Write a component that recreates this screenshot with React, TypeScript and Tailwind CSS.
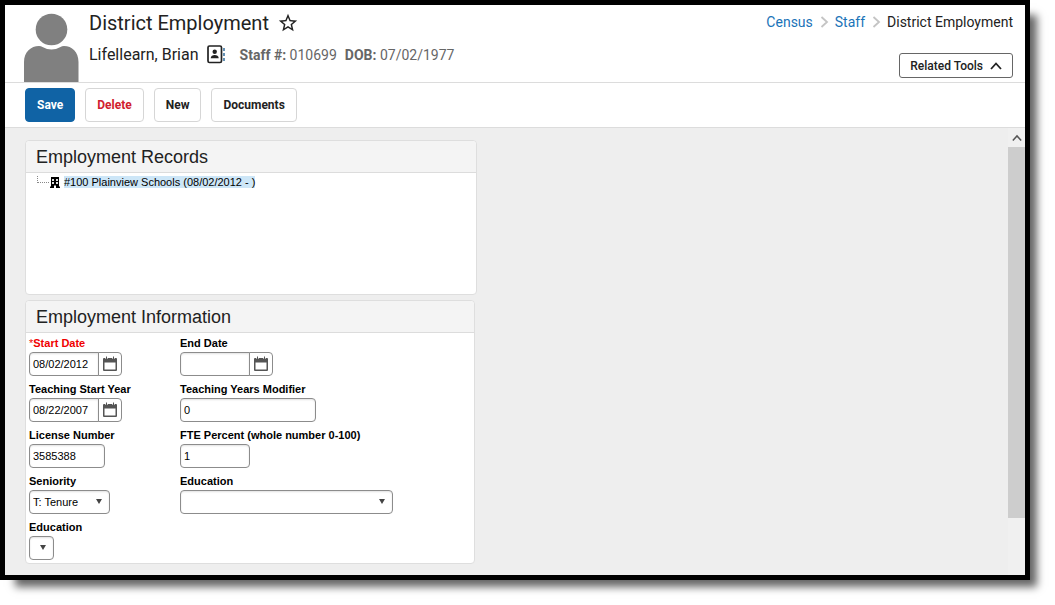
import { useState } from 'react';
import { MdStarBorder } from 'react-icons/md';

const FIELD = 'h-6 rounded border border-[#8c8c8c] bg-white px-[3px] text-[11px] text-black shadow-[inset_0_1px_2px_rgba(0,0,0,0.12)] outline-none focus:border-[#1063a5]';
const TOOL_BUTTON = 'h-[34px] rounded border px-[11px] text-xs font-bold';

function AvatarIcon() {
    return (
        <svg width="56" height="69" viewBox="0 0 56 69" fill="#808080" aria-hidden="true">
            <path d="M1 69V49C1 39 8 33 16 33Q18 33 19.500 34Q28.500 39 37.500 34Q39 33 41 33C49 33 55.500 39 55.500 49V69Z" />
            <circle cx="28.500" cy="16.500" r="15.800" />
        </svg>
    );
}

function ContactIcon() {
    return (
        <svg width="19" height="20" viewBox="0 0 19 20" aria-hidden="true">
            <rect x="1" y="1" width="13.500" height="16.500" rx="1.500" fill="none" stroke="#222" strokeWidth="1.700" />
            <circle cx="7.700" cy="6.800" r="2.200" fill="#222" />
            <path d="M3.700 13.300C3.700 11 5.700 10 7.700 10S11.700 11 11.700 13.300Z" fill="#222" />
            <path d="M17 3V16.500" stroke="#4a7fa8" strokeWidth="1.700" strokeDasharray="3 2" />
        </svg>
    );
}

function CalendarIcon() {
    return (
        <svg width="16" height="16" viewBox="0 0 16 16" aria-hidden="true">
            <path d="M1 3Q1 2 2 2H14Q15 2 15 3V14Q15 15 14 15H2Q1 15 1 14ZM2.500 6.500V13.500H13.500V6.500Z" fill="#555" fillRule="evenodd" />
            <path d="M4.500 0.500V3M11.500 0.500V3" stroke="#fff" strokeWidth="2.200" />
            <path d="M4.500 0.500V3M11.500 0.500V3" stroke="#555" strokeWidth="1" />
        </svg>
    );
}

function BuildingIcon() {
    return (
        <svg width="10" height="11" viewBox="0 0 10 11" aria-hidden="true">
            <path d="M1 0H9V9.500H10V11H6V8.500H4V11H0V9.500H1Z" fill="#000" />
            <path d="M2 2H4V4H2ZM6 2H8V4H6ZM2 5H4V7H2ZM6 5H8V7H6Z" fill="#ddd" />
        </svg>
    );
}

function Chevron({ up = false, color = '#222', size = 12 }: { up?: boolean; color?: string; size?: number }) {
    return (
        <svg width={size} height={size} viewBox="0 0 12 12" fill="none" stroke={color} strokeWidth="1.800" aria-hidden="true">
            <path d={up ? 'M1 9L6 3.500L11 9' : 'M3.500 1L9 6L3.500 11'} />
        </svg>
    );
}

function Label({ id, text, required = false }: { id: string; text: string; required?: boolean }) {
    return (
        <label htmlFor={id} className={`block h-4 text-[11px] leading-[15px] font-bold ${required ? 'text-[#f00000]' : 'text-black'}`}>
            {required && <span className="font-normal">*</span>}{text}
        </label>
    );
}

function DateField({ id, label, value, required }: { id: string; label: string; value: string; required?: boolean }) {
    return (
        <div>
            <Label id={id} text={label} required={required} />
            <div className="flex">
                <input id={id} type="text" defaultValue={value} className={`${FIELD} w-[70px] rounded-r-none`} />
                <button
                    type="button"
                    aria-label={`Open calendar for ${label}`}
                    className="-ml-px flex h-6 w-6 items-center justify-center rounded-r border border-[#8c8c8c] bg-white"
                >
                    <CalendarIcon />
                </button>
            </div>
        </div>
    );
}

function TextField({ id, label, value, width }: { id: string; label: string; value: string; width: string }) {
    return (
        <div>
            <Label id={id} text={label} />
            <input id={id} type="text" defaultValue={value} className={`${FIELD} block ${width}`} />
        </div>
    );
}

function SelectField({ id, label, options, width }: { id: string; label: string; options: string[]; width: string }) {
    return (
        <div>
            <Label id={id} text={label} />
            <div className={`relative ${width}`}>
                <select id={id} className={`${FIELD} block w-full appearance-none`}>
                    {options.map((option) => <option key={option}>{option}</option>)}
                </select>
                <svg className="pointer-events-none absolute top-[9px] right-2" width="6" height="5" viewBox="0 0 6 5" aria-hidden="true">
                    <path d="M0 0H6L3 5Z" fill="#444" />
                </svg>
            </div>
        </div>
    );
}

function PanelTitle({ children }: { children: string }) {
    return (
        <h2 className="h-8 rounded-t border-b border-[#dcdcdc] bg-[#f4f4f4] px-2.5 text-lg leading-8 text-[#222]">
            {children}
        </h2>
    );
}

export default function App() {
    const [selected, setSelected] = useState(true);

    return (
        <div className="bg-white pr-[25px] pb-[25px] font-['Liberation_Sans',Arial,sans-serif]">
            <div className="border-[5px] border-black bg-white shadow-[11px_11px_8px_-4px_rgba(0,0,0,0.6)]">
                <header className="flex items-end border-b border-[#dcdcdc] pr-3 pl-[18px] font-[Roboto,sans-serif] text-[#222]">
                    <div className="pt-2">
                        <AvatarIcon />
                    </div>
                    <div className="flex flex-1 justify-between self-stretch pl-2.5">
                        <div className="pt-1">
                            <h1 className="flex h-7 items-center gap-2 text-xl">
                                District Employment
                                <button type="button" aria-label="Add to favorites">
                                    <MdStarBorder size={22} />
                                </button>
                            </h1>
                            <div className="mt-1 flex h-7 items-center">
                                <span className="mr-2 text-base">Lifellearn, Brian</span>
                                <ContactIcon />
                                <span className="ml-3.5 text-sm text-[#666]"><b>Staff #:</b> 010699</span>
                                <span className="ml-2 text-sm text-[#666]"><b>DOB:</b> 07/02/1977</span>
                            </div>
                        </div>
                        <div className="flex flex-col items-end justify-between pt-[7px] pb-1">
                            <nav className="flex items-center gap-[5px] text-sm">
                                <a href="#census" className="text-[#1a73b8]">Census</a>
                                <Chevron color="#c4c4c4" />
                                <a href="#staff" className="text-[#1a73b8]">Staff</a>
                                <Chevron color="#c4c4c4" />
                                <span>District Employment</span>
                            </nav>
                            <button type="button" className="flex h-[25px] items-center gap-[7px] rounded-[3px] border border-[#666] px-2.5 text-xs font-medium">
                                Related Tools
                                <Chevron up />
                            </button>
                        </div>
                    </div>
                </header>

                <div className="flex gap-2.5 border-b border-[#dcdcdc] px-5 py-[5px] font-[Roboto,sans-serif] text-[#222]">
                    <button type="button" className={`${TOOL_BUTTON} border-[#1063a5] bg-[#1063a5] text-white`}>Save</button>
                    <button type="button" className={`${TOOL_BUTTON} border-[#d6d6d6] bg-white text-[#d0202e]`}>Delete</button>
                    <button type="button" className={`${TOOL_BUTTON} border-[#d6d6d6] bg-white`}>New</button>
                    <button type="button" className={`${TOOL_BUTTON} border-[#d6d6d6] bg-white`}>Documents</button>
                </div>

                <div className="flex bg-[#eeeeee]">
                    <main className="flex-1 px-5 pt-3 pb-[11px]">
                        <section className="w-full max-w-[452px] rounded border border-[#dedede] bg-white">
                            <PanelTitle>Employment Records</PanelTitle>
                            <div className="flex min-h-[121px] items-start pt-[3px] pl-[11px]">
                                <span className="h-[7px] w-3 border-b border-l border-dotted border-[#888]" />
                                <button
                                    type="button"
                                    onClick={() => setSelected(!selected)}
                                    className="flex items-center gap-1 pl-px text-[11px] leading-3 text-black"
                                >
                                    <BuildingIcon />
                                    <span className={selected ? 'bg-[#cde6f7]' : ''}>#100 Plainview Schools (08/02/2012 - )</span>
                                </button>
                            </div>
                        </section>

                        <section className="mt-[5px] w-full max-w-[450px] rounded border border-[#dedede] bg-white">
                            <PanelTitle>Employment Information</PanelTitle>
                            <form className="grid grid-cols-[151px_1fr] gap-y-1.5 px-[3px] pt-[3px] pb-[3px]">
                                <DateField id="startDate" label="Start Date" value="08/02/2012" required />
                                <DateField id="endDate" label="End Date" value="" />
                                <DateField id="teachingStart" label="Teaching Start Year" value="08/22/2007" />
                                <TextField id="yearsModifier" label="Teaching Years Modifier" value="0" width="w-34" />
                                <TextField id="license" label="License Number" value="3585388" width="w-19" />
                                <TextField id="fte" label="FTE Percent (whole number 0-100)" value="1" width="w-[70px]" />
                                <SelectField id="seniority" label="Seniority" options={['T: Tenure']} width="w-[81px]" />
                                <SelectField id="education" label="Education" options={['']} width="w-[213px]" />
                                <SelectField id="educationOther" label="Education" options={['']} width="w-[25px]" />
                            </form>
                        </section>
                    </main>
                    <div className="flex w-[17px] flex-col bg-[#f0f0f0]">
                        <button type="button" aria-label="Scroll up" className="flex h-[19px] items-center justify-center">
                            <Chevron up color="#555" size={10} />
                        </button>
                        <div className="flex-[371] bg-[#cdcdcd]" />
                        <div className="flex-[57]" />
                    </div>
                </div>
            </div>
        </div>
    );
}
